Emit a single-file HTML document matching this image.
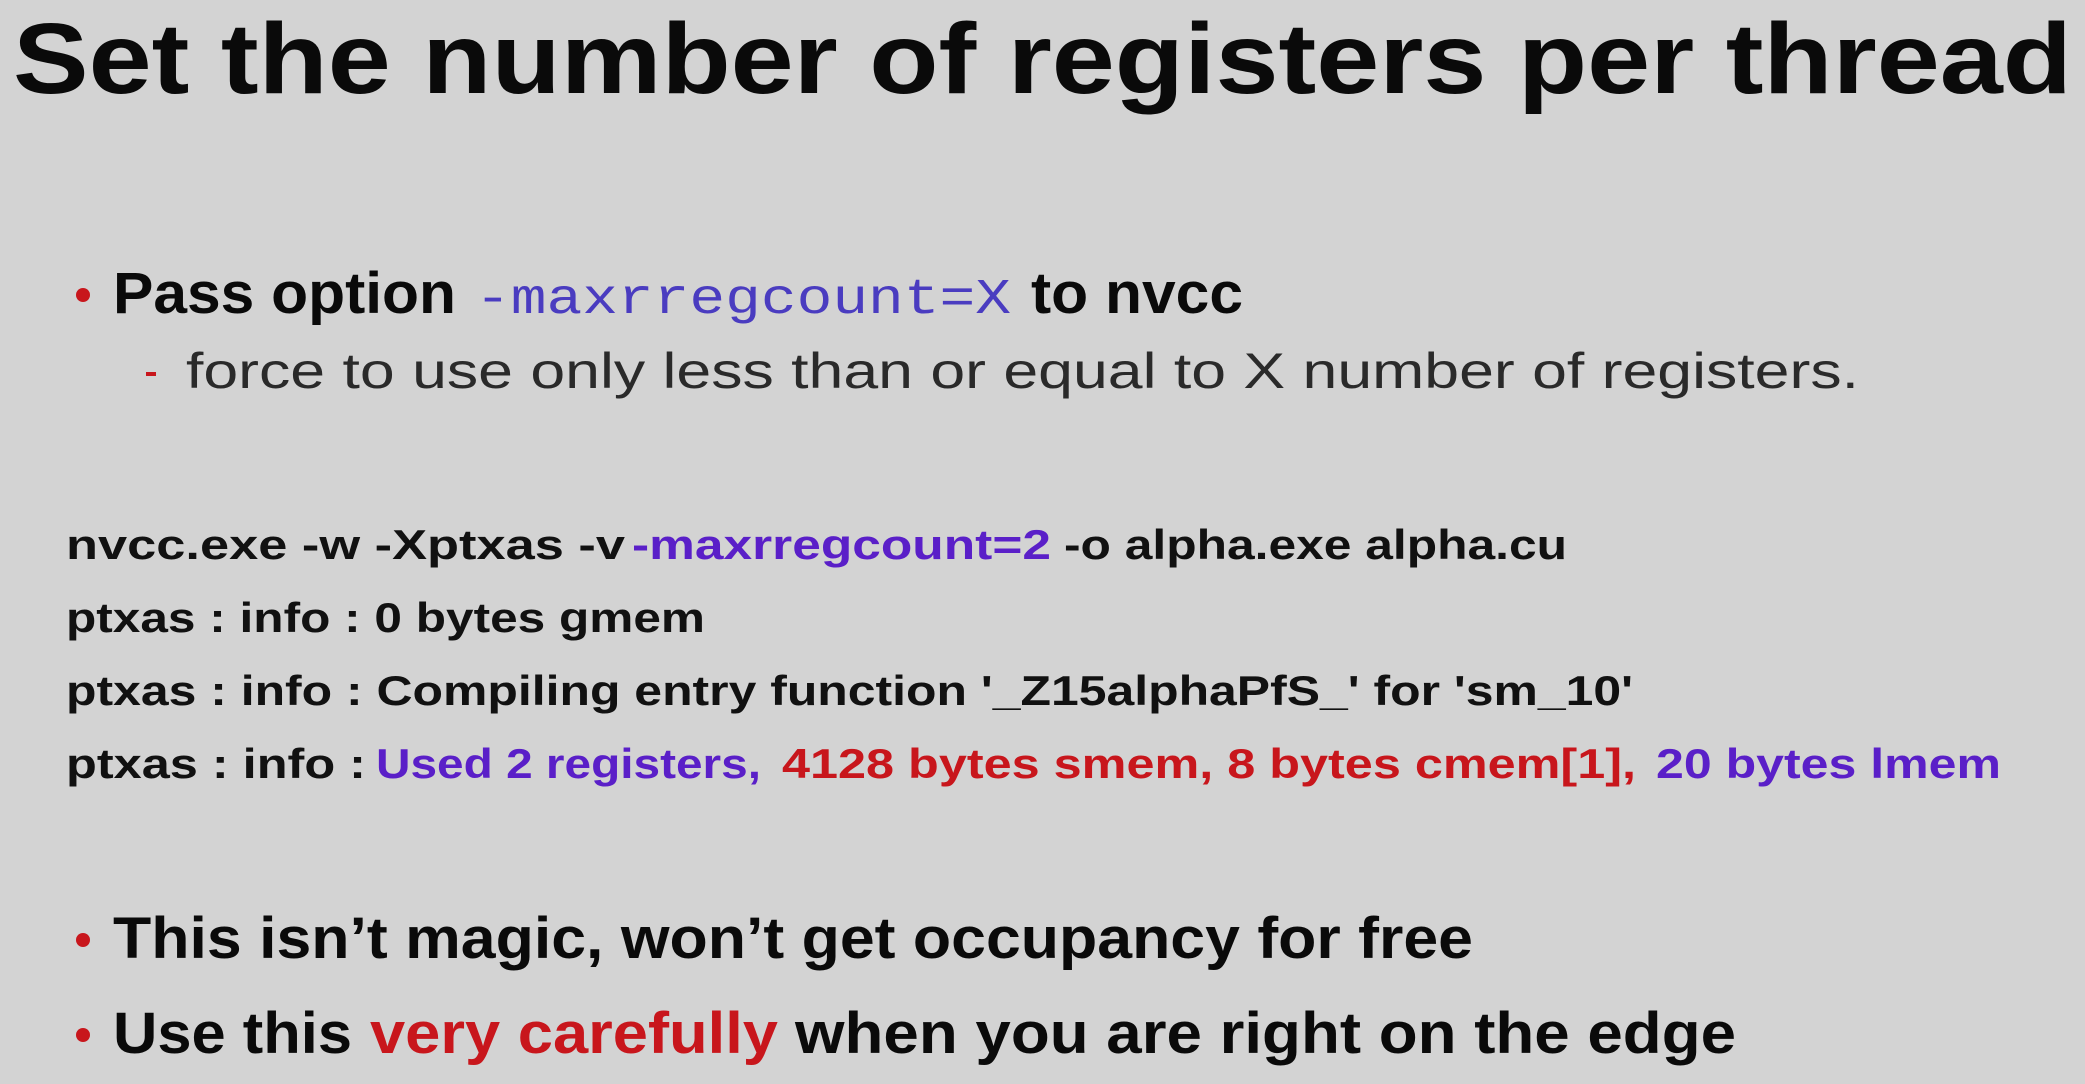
<!DOCTYPE html>
<html><head><meta charset="utf-8"><style>
html,body{margin:0;padding:0;background:#d3d3d3;}
svg{display:block;}
text{font-family:"Liberation Sans",sans-serif;}
.b{font-weight:bold;}
</style></head><body>
<svg width="2085" height="1084" viewBox="0 0 2085 1084" xmlns="http://www.w3.org/2000/svg">
<rect width="2085" height="1084" fill="#d3d3d3"/>
<text class="b" x="13" y="93" font-size="100" fill="#0a0a0a" textLength="2059" lengthAdjust="spacingAndGlyphs">Set the number of registers per thread</text>

<circle cx="83" cy="295" r="7" fill="#c8161c"/>
<text class="b" x="113" y="313" font-size="58" fill="#0a0a0a" textLength="343" lengthAdjust="spacingAndGlyphs">Pass option</text>
<text x="475" y="313" font-size="50" fill="#4a3cc0" font-family="Liberation Mono, monospace" textLength="536" lengthAdjust="spacingAndGlyphs" style="font-family:'Liberation Mono',monospace">-maxrregcount=X</text>
<text class="b" x="1031" y="313" font-size="58" fill="#0a0a0a" textLength="212" lengthAdjust="spacingAndGlyphs">to nvcc</text>

<rect x="146" y="372" width="10" height="4" fill="#c8161c"/>
<text x="186" y="388" font-size="50" fill="#2a2a2a" textLength="1673" lengthAdjust="spacingAndGlyphs">force to use only less than or equal to X number of registers.</text>

<text class="b" x="66" y="559" font-size="42" fill="#111" textLength="559" lengthAdjust="spacingAndGlyphs">nvcc.exe  -w -Xptxas -v</text>
<text class="b" x="632" y="559" font-size="42" fill="#5a1fc8" textLength="419" lengthAdjust="spacingAndGlyphs">-maxrregcount=2</text>
<text class="b" x="1064" y="559" font-size="42" fill="#111" textLength="503" lengthAdjust="spacingAndGlyphs">-o alpha.exe alpha.cu</text>

<text class="b" x="66" y="632" font-size="42" fill="#111" textLength="639" lengthAdjust="spacingAndGlyphs">ptxas : info : 0 bytes gmem</text>
<text class="b" x="66" y="705" font-size="42" fill="#111" textLength="1567" lengthAdjust="spacingAndGlyphs">ptxas : info : Compiling entry function '_Z15alphaPfS_' for 'sm_10'</text>

<text class="b" x="66" y="778" font-size="42" fill="#111" textLength="300" lengthAdjust="spacingAndGlyphs">ptxas : info :</text>
<text class="b" x="376" y="778" font-size="42" fill="#5a1fc8" textLength="385" lengthAdjust="spacingAndGlyphs">Used 2 registers,</text>
<text class="b" x="782" y="778" font-size="42" fill="#c8161c" textLength="854" lengthAdjust="spacingAndGlyphs">4128 bytes smem, 8 bytes cmem[1],</text>
<text class="b" x="1656" y="778" font-size="42" fill="#5a1fc8" textLength="345" lengthAdjust="spacingAndGlyphs">20 bytes lmem</text>

<circle cx="83" cy="940" r="7" fill="#c8161c"/>
<text class="b" x="113" y="958" font-size="58" fill="#0a0a0a" textLength="1360" lengthAdjust="spacingAndGlyphs">This isn’t magic, won’t get occupancy for free</text>

<circle cx="83" cy="1035" r="7" fill="#c8161c"/>
<text class="b" x="113" y="1053" font-size="58" fill="#0a0a0a" textLength="239" lengthAdjust="spacingAndGlyphs">Use this</text>
<text class="b" x="370" y="1053" font-size="58" fill="#c8161c" textLength="408" lengthAdjust="spacingAndGlyphs">very carefully</text>
<text class="b" x="795" y="1053" font-size="58" fill="#0a0a0a" textLength="941" lengthAdjust="spacingAndGlyphs">when you are right on the edge</text>
</svg>
</body></html>
